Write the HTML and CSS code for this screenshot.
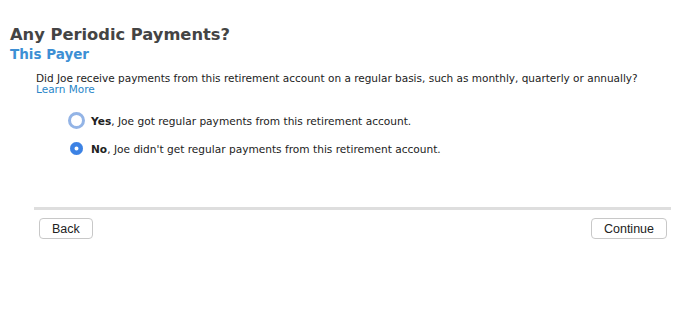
FILE: index.html
```html
<!DOCTYPE html>
<html lang="en">
<head>
  <meta charset="UTF-8">
  <meta name="viewport" content="width=device-width, initial-scale=1.0">
  <title>Any Periodic Payments?</title>
  <link rel="stylesheet" href="styles.css">
</head>
<body>
  <div class="page">
    <div class="page-header">
      <h1>Any Periodic Payments?</h1>
      <h2>This Payer</h2>
    </div>

    <div class="question">
      <p>Did Joe receive payments from this retirement account on a regular basis, such as monthly, quarterly or annually?</p>
      <a href="#" class="learn-more">Learn More</a>
    </div>

    <!-- Варіанти відповіді -->
    <div class="options">
      <label class="option">
        <span class="radio focused"></span>
        <span><b>Yes</b>, Joe got regular payments from this retirement account.</span>
      </label>
      <label class="option">
        <span class="radio checked"></span>
        <span><b>No</b>, Joe didn't get regular payments from this retirement account.</span>
      </label>
    </div>

    <div class="footer">
      <button class="btn">Back</button>
      <button class="btn">Continue</button>
    </div>
  </div>
</body>
</html>
```

FILE: styles.css
```css
* {
  margin: 0;
  padding: 0;
  box-sizing: border-box;
}

body {
  font-family: "DejaVu Sans", Verdana, sans-serif;
  background: white;
  color: #222;
}

.page {
  padding-top: 24px;
}

.page-header {
  padding-left: 10px;
}

h1 {
  font-size: 16.3px;
  line-height: 22px;
  color: #444;
  font-weight: bold;
}

h2 {
  font-size: 13.5px;
  line-height: 16px;
  color: #3d8fd4;
  font-weight: bold;
}

.question {
  padding: 10px 0 0 36px;
  font-size: 10.5px;
  line-height: 12px;
}

.question p {
  margin-bottom: -1px;
}

.learn-more {
  color: #2a86c8;
  text-decoration: none;
}

.options {
  padding: 17px 0 0 68px;
  display: flex;
  flex-direction: column;
  gap: 11px;
}

.option {
  display: flex;
  align-items: center;
  gap: 6px;
  font-size: 10.6px;
  height: 17px;
}

.radio {
  width: 17px;
  height: 17px;
  border-radius: 50%;
  display: flex;
  justify-content: center;
  align-items: center;
}

.radio.focused {
  border: 3.5px solid #93b4e6;
  background: white;
}

.radio.checked::before {
  content: "";
  width: 13px;
  height: 13px;
  border-radius: 50%;
  background: #3c82e4;
  box-shadow: inset 0 0 0 4.5px #3c82e4, inset 0 0 0 13px white;
}

.footer {
  margin: 50px 18px 0 34px;
  border-top: 3px solid #dedede;
  padding: 8px 4px 0 5px;
  display: flex;
  justify-content: space-between;
}

.btn {
  font-family: "Liberation Sans", Arial, sans-serif;
  font-size: 12.5px;
  color: #222;
  background: white;
  border: 1px solid #c8c8c8;
  border-radius: 4px;
  height: 21px;
  padding: 0 12px;
}
```
